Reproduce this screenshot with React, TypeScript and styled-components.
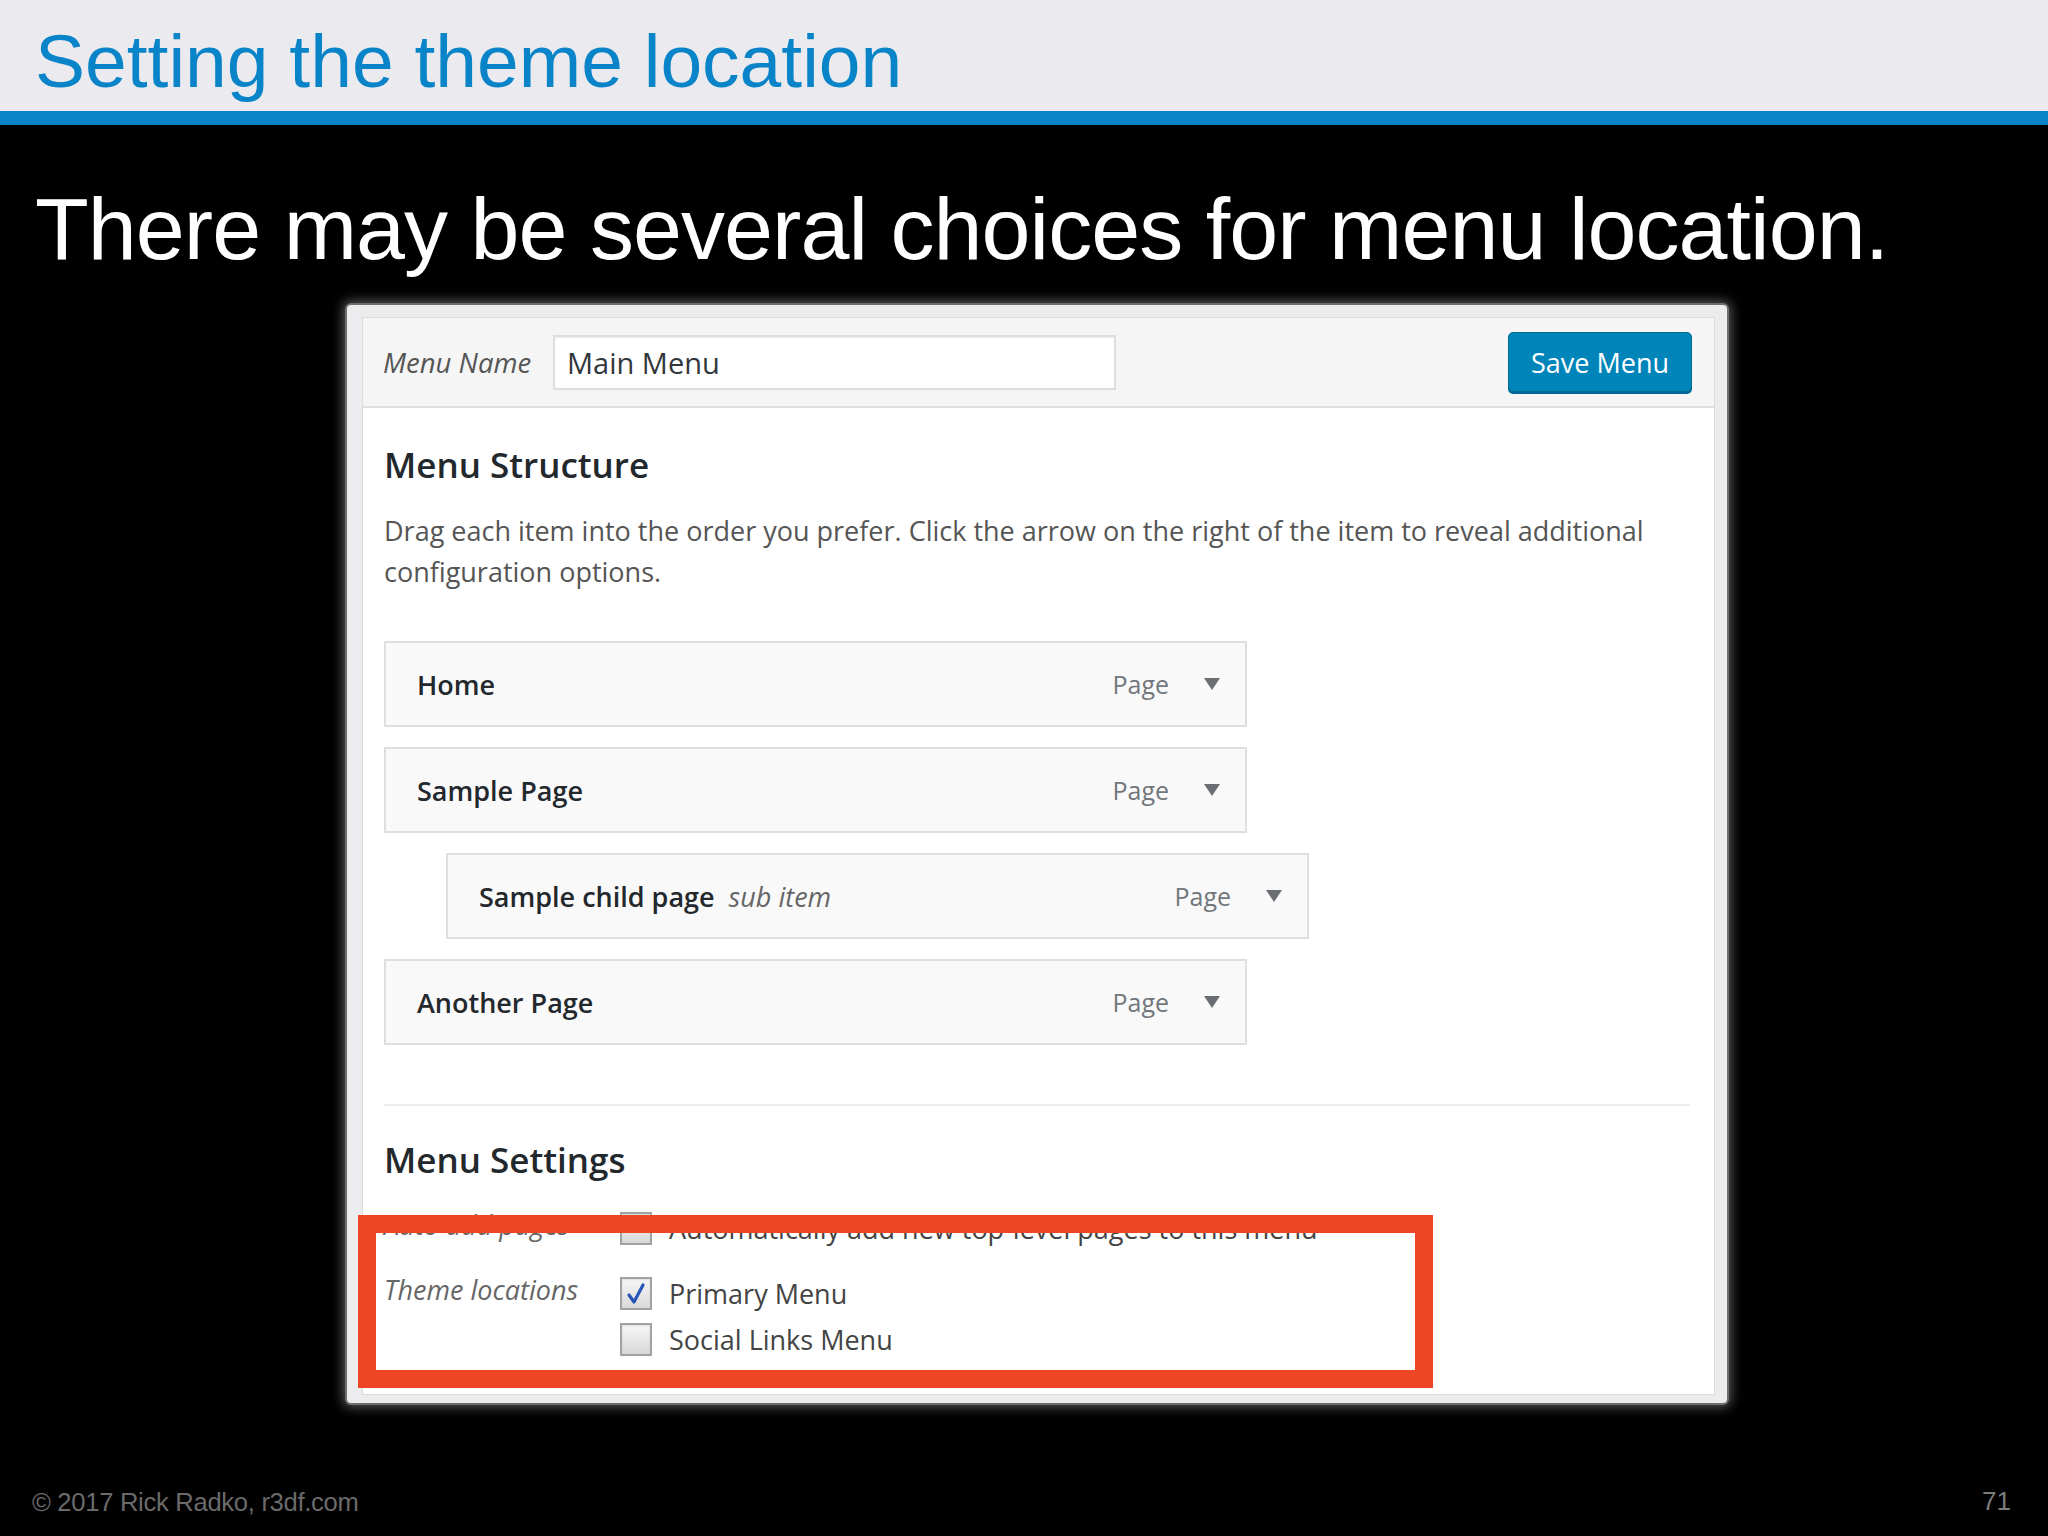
import styled, { createGlobalStyle } from 'styled-components';

const GlobalStyle = createGlobalStyle`
  html, body {
    margin: 0;
    padding: 0;
    background: #000000;
  }
  * {
    box-sizing: border-box;
  }
`;

const menuItems = [
  { title: 'Home', depth: 0 },
  { title: 'Sample Page', depth: 0 },
  { title: 'Sample child page', depth: 1, sub: 'sub item' },
  { title: 'Another Page', depth: 0 },
];

const locations = [
  { name: 'Primary Menu', checked: true },
  { name: 'Social Links Menu', checked: false },
];

const Check = ({ checked }: { checked: boolean }) => (
  <CheckBox>
    {checked && (
      <svg width="22" height="24" viewBox="0 0 22 24">
        <path d="M4 13 L9 20 L18 3" fill="none" stroke="#2a55b8" strokeWidth="3.2" strokeLinecap="round" strokeLinejoin="round" />
      </svg>
    )}
  </CheckBox>
);

const Arrow = () => (
  <ArrowIcon width="16" height="12" viewBox="0 0 16 12">
    <path d="M0 0 H16 L8 12 Z" fill="#6b6f73" />
  </ArrowIcon>
);

const App = () => {
  return (
    <>
      <GlobalStyle />
      <Slide>
        <TitleBar>
          <Title>Setting the theme location</Title>
        </TitleBar>
        <Subtitle>There may be several choices for menu location.</Subtitle>

        <Frame>
          <Panel>
            <PanelHeader>
              <NameLabel>Menu Name</NameLabel>
              <NameInput>Main Menu</NameInput>
              <SaveButton>Save Menu</SaveButton>
            </PanelHeader>
            <PanelBody>
              <SectionTitle>Menu Structure</SectionTitle>
              <Description>
                Drag each item into the order you prefer. Click the arrow on the right of the item to reveal additional
                <br />
                configuration options.
              </Description>

              <ItemList>
                {menuItems.map((item) => (
                  <ItemRow key={item.title} $depth={item.depth}>
                    <ItemTitle>{item.title}</ItemTitle>
                    {item.sub && <SubItem>{item.sub}</SubItem>}
                    <ItemType>Page</ItemType>
                    <Arrow />
                  </ItemRow>
                ))}
              </ItemList>

              <Divider />

              <SettingsTitle>Menu Settings</SettingsTitle>
              <SettingsRow>
                <SettingsLabel>Auto add pages</SettingsLabel>
                <OptionList>
                  <Option>
                    <Check checked={false} />
                    <OptionText>Automatically add new top-level pages to this menu</OptionText>
                  </Option>
                </OptionList>
              </SettingsRow>
              <SettingsRow $spaced>
                <SettingsLabel>Theme locations</SettingsLabel>
                <OptionList>
                  {locations.map((loc) => (
                    <Option key={loc.name}>
                      <Check checked={loc.checked} />
                      <OptionText>{loc.name}</OptionText>
                    </Option>
                  ))}
                </OptionList>
              </SettingsRow>
            </PanelBody>
          </Panel>
          <Highlight />
        </Frame>

        <Footer>
          <Copyright>© 2017 Rick Radko, r3df.com</Copyright>
          <PageNumber>71</PageNumber>
        </Footer>
      </Slide>
    </>
  );
};

export default App;

const Slide = styled.div`
  display: flex;
  flex-direction: column;
  width: 2048px;
  height: 1536px;
  background: #000000;
  overflow: hidden;
`;

const TitleBar = styled.div`
  height: 125px;
  padding: 18px 0 0 35px;
  background: #ebebef;
  border-bottom: 14px solid #0a84c8;
`;

const Title = styled.h1`
  margin: 0;
  font-family: 'Liberation Sans', Arial, sans-serif;
  font-size: 75px;
  font-weight: 400;
  line-height: 86px;
  color: #0a84c8;
`;

const Subtitle = styled.h2`
  margin: 53px 0 0 35px;
  font-family: 'Liberation Sans', Arial, sans-serif;
  font-size: 88px;
  font-weight: 400;
  letter-spacing: -0.95px;
  line-height: 101px;
  color: #ffffff;
`;

const Frame = styled.div`
  position: relative;
  width: 1380px;
  height: 1098px;
  margin: 26px 0 0 347px;
  padding: 12px 12px 8px 15px;
  background: #ececef;
  border-radius: 4px;
  box-shadow: 0 0 0 2px #6e6e6e, 0 0 12px 4px rgba(120, 120, 120, 0.75);
`;

const Panel = styled.div`
  display: flex;
  flex-direction: column;
  height: 100%;
  background: #ffffff;
  border: 1px solid #dcdcdc;
  overflow: hidden;
`;

const PanelHeader = styled.div`
  display: flex;
  align-items: center;
  height: 90px;
  padding: 0 22px 0 20px;
  background: #f5f5f5;
  border-bottom: 2px solid #dedede;
  font-family: 'Open Sans', 'Noto Sans', sans-serif;
`;

const NameLabel = styled.span`
  width: 170px;
  font-size: 27.5px;
  font-style: italic;
  color: #555555;
`;

const NameInput = styled.div`
  display: flex;
  align-items: center;
  width: 563px;
  height: 55px;
  padding: 0 12px;
  background: #ffffff;
  border: 2px solid #dddddd;
  box-shadow: inset 0 1px 2px rgba(0, 0, 0, 0.07);
  font-size: 29px;
  color: #32373c;
`;

const SaveButton = styled.button`
  margin-left: auto;
  width: 184px;
  height: 60px;
  padding: 0;
  background: #0085ba;
  border: 1px solid #006a95;
  border-radius: 5px;
  box-shadow: 0 2px 0 #006799;
  font-family: 'Open Sans', 'Noto Sans', sans-serif;
  font-size: 27px;
  color: #ffffff;
`;

const PanelBody = styled.div`
  padding: 34px 24px 0 21px;
  font-family: 'Open Sans', 'Noto Sans', sans-serif;
`;

const SectionTitle = styled.h3`
  margin: 0;
  font-size: 35px;
  font-weight: 600;
  line-height: 46px;
  color: #23282d;
`;

const Description = styled.p`
  margin: 22px 0 0;
  font-size: 27px;
  line-height: 41px;
  color: #555555;
  white-space: nowrap;
`;

const ItemList = styled.div`
  display: flex;
  flex-direction: column;
  gap: 20px;
  margin-top: 49px;
`;

const ItemRow = styled.div<{ $depth: number }>`
  display: flex;
  align-items: center;
  width: 863px;
  height: 86px;
  margin-left: ${(p) => p.$depth * 62}px;
  padding: 0 25px 0 31px;
  background: #f9f9f9;
  border: 2px solid #dfdfdf;
`;

const ItemTitle = styled.span`
  font-size: 27px;
  font-weight: 600;
  color: #23282d;
`;

const SubItem = styled.span`
  margin-left: 14px;
  font-size: 27px;
  font-style: italic;
  color: #666666;
`;

const ItemType = styled.span`
  margin-left: auto;
  font-size: 25px;
  color: #72777c;
`;

const ArrowIcon = styled.svg`
  margin-left: 35px;
  flex-shrink: 0;
`;

const Divider = styled.div`
  height: 2px;
  margin-top: 59px;
  background: #ececec;
`;

const SettingsTitle = styled(SectionTitle)`
  margin-top: 31px;
`;

const SettingsRow = styled.div<{ $spaced?: boolean }>`
  display: grid;
  grid-template-columns: 236px 1fr;
  margin-top: ${(p) => (p.$spaced ? 32 : 29)}px;
`;

const SettingsLabel = styled.span`
  font-size: 27px;
  font-style: italic;
  line-height: 26px;
  color: #666666;
`;

const OptionList = styled.div`
  display: flex;
  flex-direction: column;
  gap: 13px;
`;

const Option = styled.label`
  display: flex;
  align-items: center;
  gap: 17px;
  height: 33px;
`;

const CheckBox = styled.span`
  display: flex;
  align-items: center;
  justify-content: center;
  width: 32px;
  height: 33px;
  background: linear-gradient(to bottom, #f6f6f6, #d9d9d9);
  border: 2px solid #9ea3a8;
  box-shadow: inset 0 1px 2px rgba(0, 0, 0, 0.1);
`;

const OptionText = styled.span`
  font-size: 27px;
  line-height: 33px;
  color: #444444;
`;

const Highlight = styled.div`
  position: absolute;
  left: 11px;
  top: 910px;
  width: 1075px;
  height: 173px;
  border: 18px solid #ee4524;
  pointer-events: none;
`;

const Footer = styled.div`
  display: flex;
  justify-content: space-between;
  align-items: flex-end;
  margin-top: auto;
  padding: 0 37px 19px 32px;
  font-family: 'Liberation Sans', Arial, sans-serif;
`;

const Copyright = styled.span`
  font-size: 25.6px;
  letter-spacing: -0.3px;
  color: #6a6a6a;
`;

const PageNumber = styled.span`
  font-size: 26px;
  color: #7c7c7c;
`;
